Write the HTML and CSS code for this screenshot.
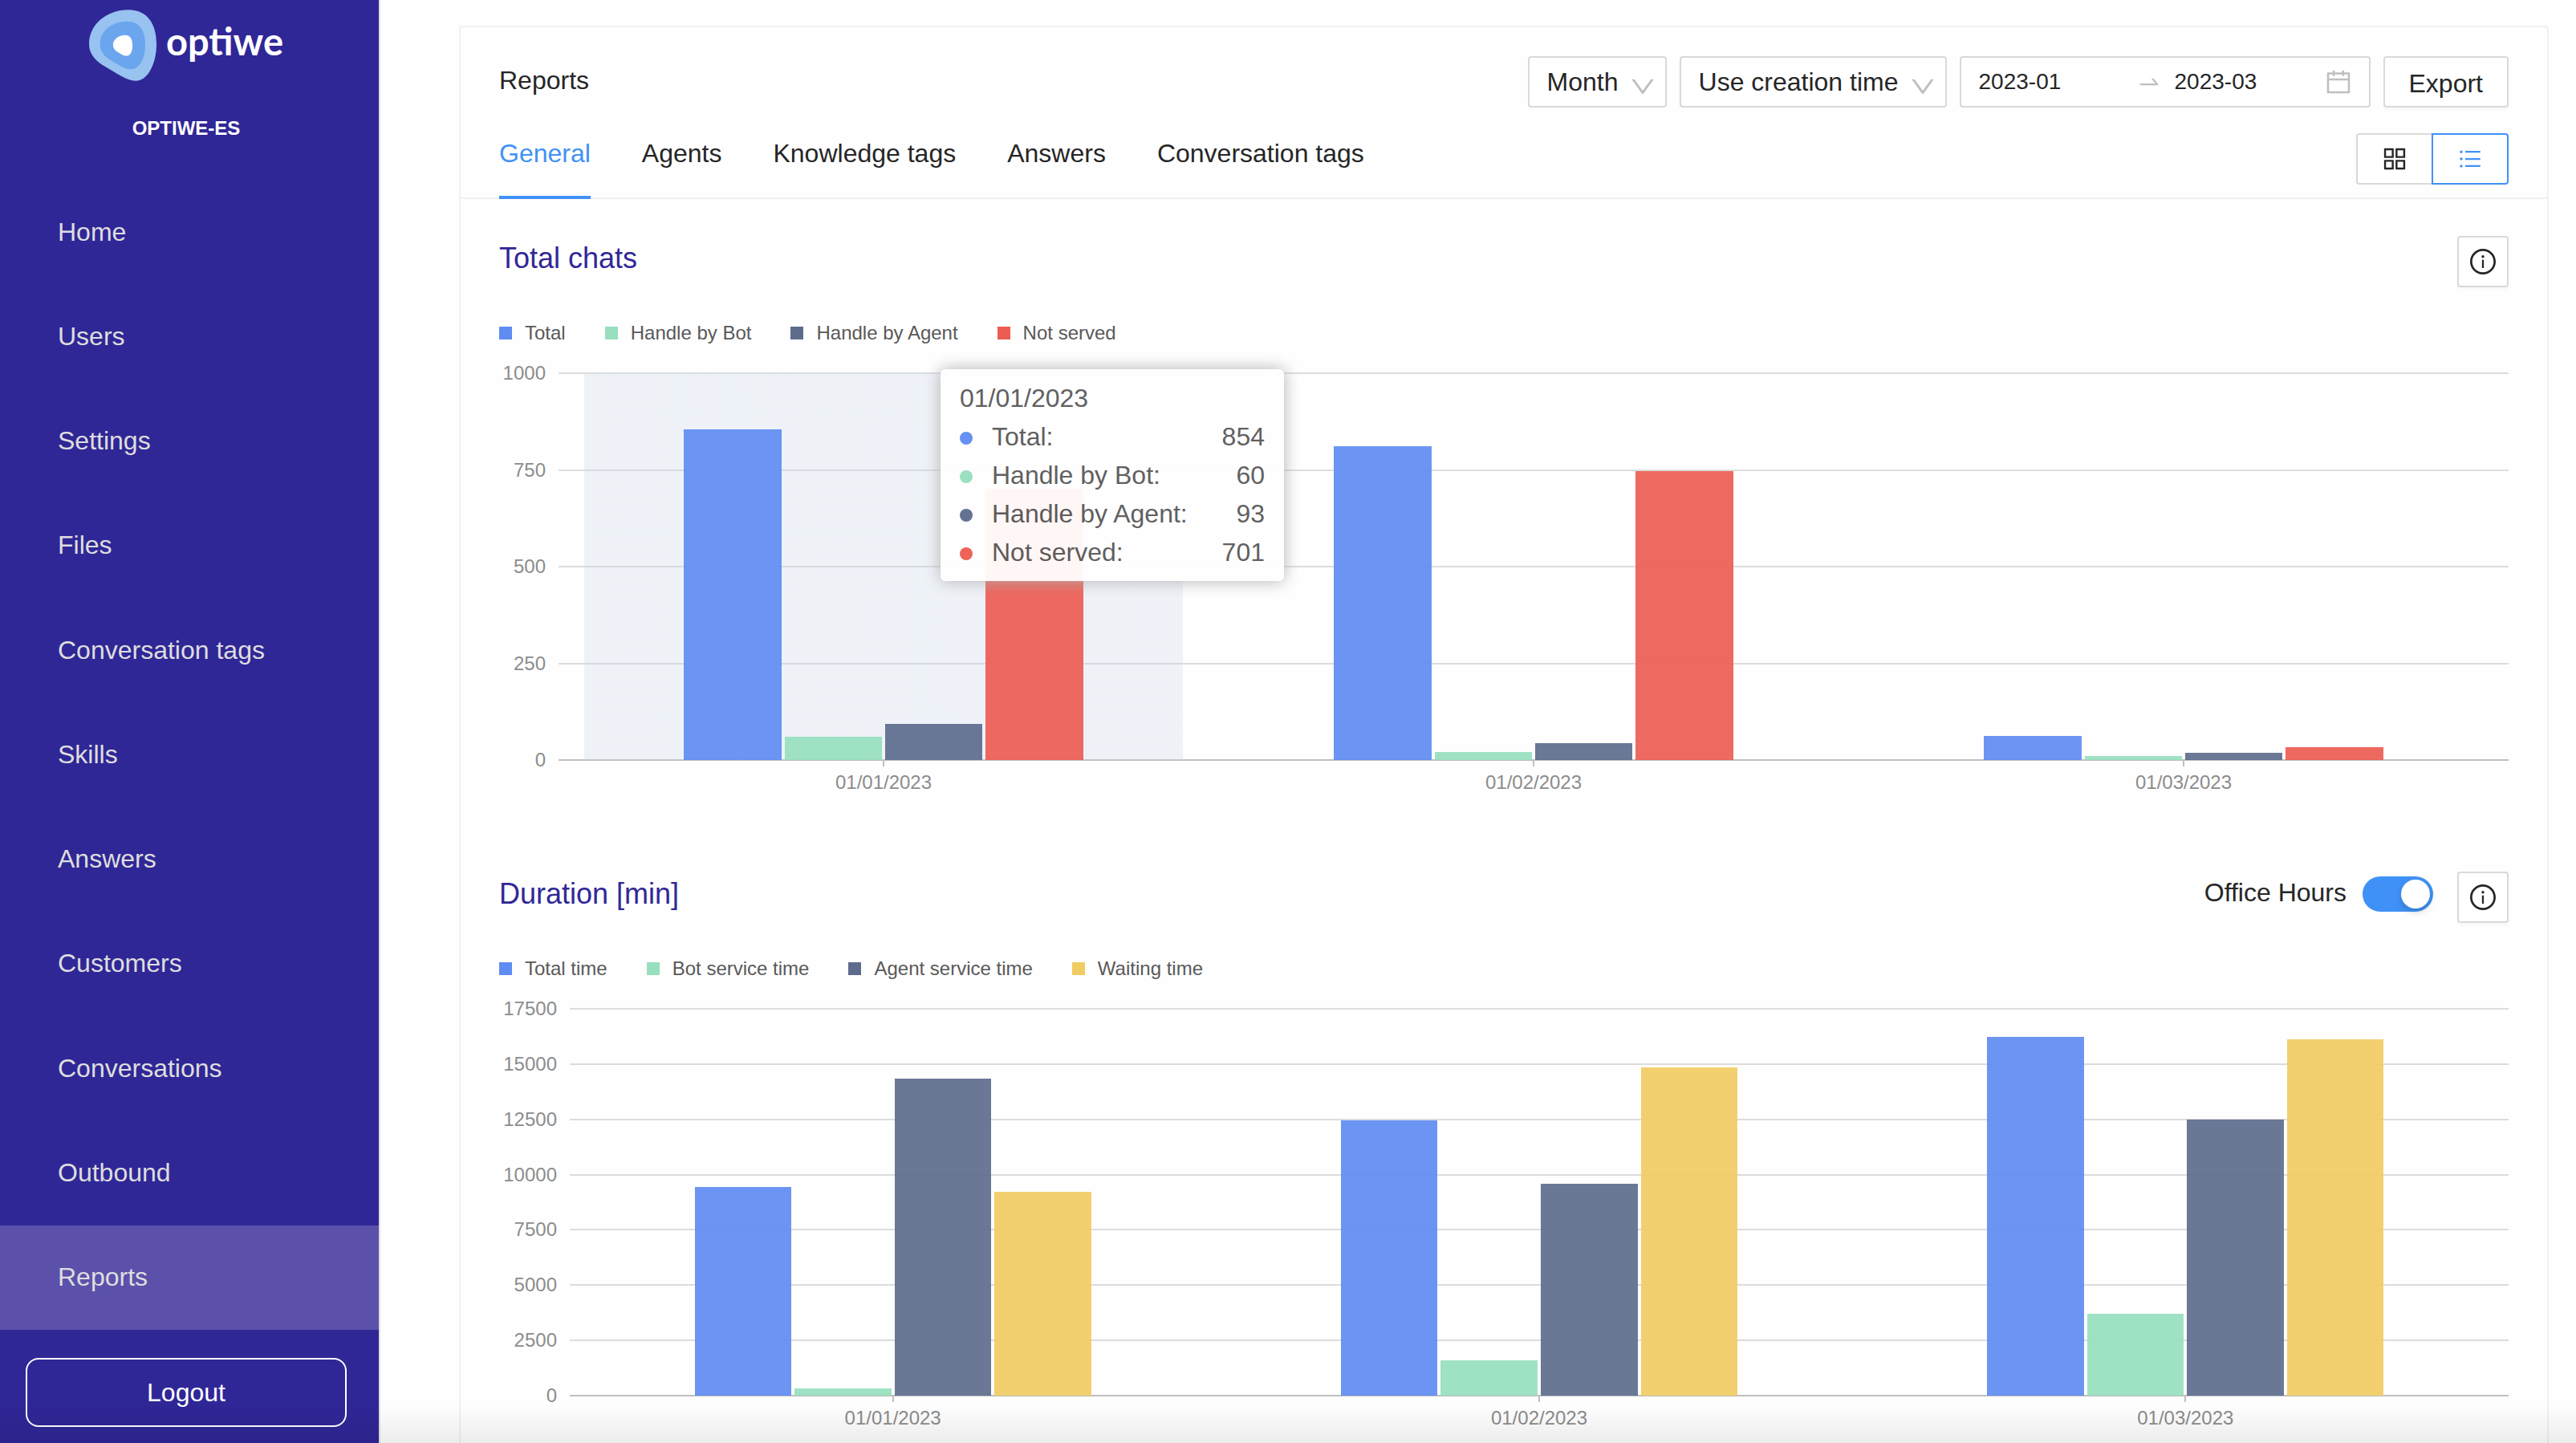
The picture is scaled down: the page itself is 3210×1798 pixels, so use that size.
FILE: index.html
```html
<!DOCTYPE html>
<html lang="en">
<head>
    <meta charset="utf-8">
    <title>Reports - optiwe</title>
    <meta name="viewport" content="width=device-width, initial-scale=1">
    <link rel="stylesheet" href="styles.css">
</head>
<body>
    <div class="app">
    <aside class="sidebar">
        <div class="brand">
            <div class="logo">
                <svg class="logo-mark" viewBox="333 36 253 267" aria-hidden="true">
                    <path fill="#98c2f0" d="M480 36C560 36 586 100 586 165C586 235 555 303 508 303C475 303 430 270 395 250C360 230 333 205 333 165C333 90 400 36 480 36z"/>
                    <path fill="#6ba5ee" d="M475 80C527 80 544 120 544 165C544 215 525 259 490 259C465 259 440 240 415 226C392 212 374 195 374 165C374 115 420 80 475 80z"/>
                    <path fill="#fff" d="M467 131C490 131 496 150 496 170C496 192 488 209 473 209C462 209 450 200 440 194C430 188 423 180 423 167C423 147 445 131 467 131z"/>
                </svg>
                <span class="logo-text">optiwe</span>
            </div>
            <div class="company">OPTIWE-ES</div>
        </div>
        <nav class="menu">
            <a href="#">Home</a>
            <a href="#">Users</a>
            <a href="#">Settings</a>
            <a href="#">Files</a>
            <a href="#">Conversation tags</a>
            <a href="#">Skills</a>
            <a href="#">Answers</a>
            <a href="#">Customers</a>
            <a href="#">Conversations</a>
            <a href="#">Outbound</a>
            <a href="#" class="active">Reports</a>
        </nav>
        <button type="button" class="logout">Logout</button>
    </aside>

    <main class="content">
        <div class="card">
            <header class="card-head">
                <div class="head-row">
                    <h1>Reports</h1>
                    <div class="filters">
                        <div class="select">
                            <select aria-label="Period">
                                <option>Month</option>
                            </select>
                            <svg class="icon" viewBox="64 64 896 896"><path d="M884 256h-75c-5.1 0-9.9 2.5-12.9 6.6L512 654.2 227.9 262.6c-3-4.1-7.8-6.6-12.9-6.6h-75c-6.5 0-10.3 7.4-6.5 12.7l352.6 486.1c12.8 17.6 39 17.6 51.7 0l352.6-486.1c3.9-5.3.1-12.7-6.4-12.7z"/></svg>
                        </div>
                        <div class="select">
                            <select aria-label="Time used">
                                <option>Use creation time</option>
                            </select>
                            <svg class="icon" viewBox="64 64 896 896"><path d="M884 256h-75c-5.1 0-9.9 2.5-12.9 6.6L512 654.2 227.9 262.6c-3-4.1-7.8-6.6-12.9-6.6h-75c-6.5 0-10.3 7.4-6.5 12.7l352.6 486.1c12.8 17.6 39 17.6 51.7 0l352.6-486.1c3.9-5.3.1-12.7-6.4-12.7z"/></svg>
                        </div>
                        <div class="range">
                            <input type="text" value="2023-01" aria-label="From">
                            <svg class="icon" viewBox="0 0 1024 1024"><path d="M873.1 596.2l-164-208A32 32 0 00684 376h-64.8c-6.7 0-10.4 7.7-6.3 13l144.3 183H152c-4.4 0-8 3.6-8 8v60c0 4.4 3.6 8 8 8h695.9c26.8 0 41.7-30.8 25.2-51.8z"/></svg>
                            <input type="text" value="2023-03" aria-label="To">
                            <svg class="icon" viewBox="64 64 896 896"><path d="M880 184H712v-64c0-4.4-3.6-8-8-8h-56c-4.4 0-8 3.6-8 8v64H384v-64c0-4.4-3.6-8-8-8h-56c-4.4 0-8 3.6-8 8v64H144c-17.7 0-32 14.3-32 32v664c0 17.7 14.3 32 32 32h736c17.7 0 32-14.3 32-32V216c0-17.7-14.3-32-32-32zm-40 656H184V460h656v380zM184 392V256h128v48c0 4.4 3.6 8 8 8h56c4.4 0 8-3.6 8-8v-48h256v48c0 4.4 3.6 8 8 8h56c4.4 0 8-3.6 8-8v-48h128v136H184z"/></svg>
                        </div>
                        <button type="button" class="btn export">Export</button>
                    </div>
                </div>
                <div class="tab-row">
                    <nav class="tabs">
                        <a href="#" class="active">General</a>
                        <a href="#">Agents</a>
                        <a href="#">Knowledge tags</a>
                        <a href="#">Answers</a>
                        <a href="#">Conversation tags</a>
                    </nav>
                    <div class="views">
                        <button type="button" aria-label="Grid view">
                            <svg class="icon" viewBox="64 64 896 896"><path d="M464 144H160c-8.800 0-16 7.200-16 16v304c0 8.800 7.200 16 16 16h304c8.800 0 16-7.200 16-16V160c0-8.800-7.200-16-16-16zm-52 268H212V212h200v200zm452-268H560c-8.800 0-16 7.200-16 16v304c0 8.800 7.200 16 16 16h304c8.800 0 16-7.200 16-16V160c0-8.800-7.200-16-16-16zm-52 268H612V212h200v200zM464 544H160c-8.800 0-16 7.200-16 16v304c0 8.800 7.200 16 16 16h304c8.800 0 16-7.200 16-16V560c0-8.800-7.200-16-16-16zm-52 268H212V612h200v200zm452-268H560c-8.800 0-16 7.200-16 16v304c0 8.800 7.200 16 16 16h304c8.800 0 16-7.200 16-16V560c0-8.800-7.200-16-16-16zm-52 268H612V612h200v200z"/></svg>
                        </button>
                        <button type="button" class="active" aria-label="List view">
                            <svg class="icon small" viewBox="64 64 896 896"><path d="M912 192H328c-4.400 0-8 3.600-8 8v56c0 4.400 3.600 8 8 8h584c4.400 0 8-3.600 8-8v-56c0-4.400-3.600-8-8-8zm0 284H328c-4.400 0-8 3.600-8 8v56c0 4.400 3.600 8 8 8h584c4.400 0 8-3.600 8-8v-56c0-4.400-3.600-8-8-8zm0 284H328c-4.400 0-8 3.600-8 8v56c0 4.400 3.600 8 8 8h584c4.400 0 8-3.600 8-8v-56c0-4.400-3.600-8-8-8zM104 228a56 56 0 10112 0 56 56 0 10-112 0zm0 284a56 56 0 10112 0 56 56 0 10-112 0zm0 284a56 56 0 10112 0 56 56 0 10-112 0z"/></svg>
                        </button>
                    </div>
                </div>
            </header>

            <section class="report">
                <div class="report-head">
                    <h2>Total chats</h2>
                    <button type="button" class="btn info" aria-label="Info">
                        <svg class="icon" viewBox="64 64 896 896"><path d="M512 64C264.600 64 64 264.600 64 512s200.600 448 448 448 448-200.600 448-448S759.400 64 512 64zm0 820c-205.400 0-372-166.600-372-372s166.600-372 372-372 372 166.600 372 372-166.600 372-372 372z"/><path d="M464 336a48 48 0 1096 0 48 48 0 10-96 0zm72 112h-48c-4.400 0-8 3.600-8 8v272c0 4.400 3.600 8 8 8h48c4.400 0 8-3.600 8-8V456c0-4.400-3.600-8-8-8z"/></svg>
                    </button>
                </div>
                <ul class="legend">
                    <li class="blue">Total</li>
                    <li class="green">Handle by Bot</li>
                    <li class="navy">Handle by Agent</li>
                    <li class="redish">Not served</li>
                </ul>
                <div class="chart">
                    <div class="y-axis">
                        <span>1000</span>
                        <span>750</span>
                        <span>500</span>
                        <span>250</span>
                        <span>0</span>
                    </div>
                    <div class="plot">
                        <div class="lines"><i></i><i></i><i></i><i></i><i></i></div>
                        <div class="groups">
                            <div class="group hover">
                                <div class="bar blue" style="height: 85.4%"></div>
                                <div class="bar green" style="height: 6%"></div>
                                <div class="bar navy" style="height: 9.3%"></div>
                                <div class="bar redish" style="height: 70.1%"></div>
                            </div>
                            <div class="group">
                                <div class="bar blue" style="height: 81.1%"></div>
                                <div class="bar green" style="height: 2.1%"></div>
                                <div class="bar navy" style="height: 4.3%"></div>
                                <div class="bar redish" style="height: 74.7%"></div>
                            </div>
                            <div class="group">
                                <div class="bar blue" style="height: 6.2%"></div>
                                <div class="bar green" style="height: 1%"></div>
                                <div class="bar navy" style="height: 1.8%"></div>
                                <div class="bar redish" style="height: 3.4%"></div>
                            </div>
                        </div>
                        <div class="tooltip">
                            <div>01/01/2023</div>
                            <ul>
                                <li class="blue">Total:<span>854</span></li>
                                <li class="green">Handle by Bot:<span>60</span></li>
                                <li class="navy">Handle by Agent:<span>93</span></li>
                                <li class="redish">Not served:<span>701</span></li>
                            </ul>
                        </div>
                    </div>
                    <div class="x-axis">
                        <span>01/01/2023</span>
                        <span>01/02/2023</span>
                        <span>01/03/2023</span>
                    </div>
                </div>
            </section>

            <section class="report">
                <div class="report-head">
                    <h2>Duration [min]</h2>
                    <label class="hours" for="office-hours">Office Hours</label>
                    <input type="checkbox" class="switch" id="office-hours" checked>
                    <button type="button" class="btn info" aria-label="Info">
                        <svg class="icon" viewBox="64 64 896 896"><path d="M512 64C264.600 64 64 264.600 64 512s200.600 448 448 448 448-200.600 448-448S759.400 64 512 64zm0 820c-205.400 0-372-166.600-372-372s166.600-372 372-372 372 166.600 372 372-166.600 372-372 372z"/><path d="M464 336a48 48 0 1096 0 48 48 0 10-96 0zm72 112h-48c-4.400 0-8 3.600-8 8v272c0 4.400 3.600 8 8 8h48c4.400 0 8-3.600 8-8V456c0-4.400-3.600-8-8-8z"/></svg>
                    </button>
                </div>
                <ul class="legend">
                    <li class="blue">Total time</li>
                    <li class="green">Bot service time</li>
                    <li class="navy">Agent service time</li>
                    <li class="yellow">Waiting time</li>
                </ul>
                <div class="chart wide">
                    <div class="y-axis">
                        <span>17500</span>
                        <span>15000</span>
                        <span>12500</span>
                        <span>10000</span>
                        <span>7500</span>
                        <span>5000</span>
                        <span>2500</span>
                        <span>0</span>
                    </div>
                    <div class="plot">
                        <div class="lines"><i></i><i></i><i></i><i></i><i></i><i></i><i></i><i></i></div>
                        <div class="groups">
                            <div class="group">
                                <div class="bar blue" style="height: 53.9%"></div>
                                <div class="bar green" style="height: 1.9%"></div>
                                <div class="bar navy" style="height: 81.9%"></div>
                                <div class="bar yellow" style="height: 52.6%"></div>
                            </div>
                            <div class="group">
                                <div class="bar blue" style="height: 71.2%"></div>
                                <div class="bar green" style="height: 9.2%"></div>
                                <div class="bar navy" style="height: 54.8%"></div>
                                <div class="bar yellow" style="height: 84.9%"></div>
                            </div>
                            <div class="group">
                                <div class="bar blue" style="height: 92.8%"></div>
                                <div class="bar green" style="height: 21.2%"></div>
                                <div class="bar navy" style="height: 71.3%"></div>
                                <div class="bar yellow" style="height: 92.2%"></div>
                            </div>
                        </div>
                    </div>
                    <div class="x-axis">
                        <span>01/01/2023</span>
                        <span>01/02/2023</span>
                        <span>01/03/2023</span>
                    </div>
                </div>
            </section>
        </div>
    </main>
    </div>
</body>
</html>
```

FILE: styles.css
```css
* {
    box-sizing: border-box;
}

body {
    margin: 0;
    background-color: #fefefe;
    color: #262626;
    font-family: "Liberation Sans", Arial, Helvetica, sans-serif;
    font-size: 32px;
}

h1, h2 {
    margin: 0;
    font-weight: normal;
}

ul {
    margin: 0;
    padding: 0;
    list-style: none;
}

a {
    color: inherit;
    text-decoration: none;
}

button, input, select {
    margin: 0;
    padding: 0;
    color: inherit;
    font: inherit;
    background: none;
}

button {
    cursor: pointer;
}

.icon {
    display: block;
    width: 32px;
    height: 32px;
    fill: currentColor;
}

.icon.small {
    width: 28px;
    height: 28px;
}

/* series colours */
.blue {
    --series: #5f8cf2;
}

.green {
    --series: #97dfbe;
}

.navy {
    --series: #5d6c8d;
}

.redish {
    --series: #ed5c52;
}

.yellow {
    --series: #f1cc63;
}

.app {
    display: flex;
    height: 100vh;
    overflow: hidden;
}

/* shade along the bottom of the window */
.app::after {
    content: "";
    position: fixed;
    left: 0;
    right: 0;
    bottom: 0;
    height: 48px;
    background: linear-gradient(rgba(0, 0, 0, 0), rgba(0, 0, 0, .07));
    pointer-events: none;
}

/* sidebar */
.sidebar {
    flex: none;
    display: flex;
    flex-direction: column;
    width: 474px;
    border-right: 2px solid #e0e0e0;
    background-color: #302797;
    color: #fff;
}

.brand {
    height: 224px;
    padding: 12px 8px 0 0;
    text-align: center;
}

.logo {
    display: flex;
    align-items: center;
    justify-content: center;
    gap: 12px;
    height: 89px;
}

.logo-mark {
    width: 84px;
    height: 89px;
}

.logo-text {
    padding-bottom: 12px;
    font-family: Lato, "Open Sans", sans-serif;
    font-size: 47px;
    font-weight: bold;
    line-height: 60px;
}

.company {
    margin-top: 40px;
    font-size: 24px;
    font-weight: bold;
    line-height: 38px;
}

.menu {
    flex: 1;
    display: flex;
    flex-direction: column;
}

.menu a {
    flex: 1;
    display: flex;
    align-items: center;
    padding-left: 72px;
    color: #dedede;
}

.menu a.active {
    background-color: #5b51ab;
}

.logout {
    height: 86px;
    margin: 35px 40px 20px 32px;
    border: 2px solid #fff;
    border-radius: 16px;
    color: #fff;
}

/* card */
.content {
    flex: 1;
    min-width: 0;
    padding: 32px 34px 32px 98px;
    overflow-y: auto;
    scrollbar-width: none;
}

.card {
    border: 2px solid #f0f0f0;
    border-radius: 4px;
    background-color: #fefefe;
}

.card-head {
    padding: 36px 48px 0;
    border-bottom: 2px solid #f0f0f0;
}

.head-row {
    display: flex;
    justify-content: space-between;
}

h1 {
    font-size: 32px;
    line-height: 60px;
}

.filters {
    display: flex;
    gap: 16px;
}

.btn, .select select, .range {
    height: 64px;
    border: 2px solid #d9d9d9;
    border-radius: 4px;
    background-color: #fff;
}

.btn {
    box-shadow: 0 4px 0 rgba(0, 0, 0, .016);
}

.select {
    position: relative;
}

.select select {
    display: block;
    padding: 0 58px 0 22px;
    -webkit-appearance: none;
    appearance: none;
    outline: none;
}

.select .icon {
    position: absolute;
    top: 22px;
    right: 14px;
    color: #bfbfbf;
    pointer-events: none;
}

.range {
    display: flex;
    align-items: center;
    width: 512px;
    padding: 0 22px;
}

.range input {
    flex: 1;
    min-width: 0;
    border: none;
    outline: none;
    font-size: 28px;
}

.range .icon {
    flex: none;
    margin-left: 8px;
    color: #bfbfbf;
}

.range .icon:last-child {
    margin-left: 0;
}

.range .icon + input {
    margin-left: 16px;
}

.export {
    padding: 4px 30px 0;
}

.tab-row {
    display: flex;
    justify-content: space-between;
    align-items: flex-start;
    height: 96px;
    margin-top: 16px;
}

.tabs {
    display: flex;
    gap: 64px;
}

.tabs a {
    height: 98px;
    padding-top: 23px;
    line-height: 36px;
}

.tabs a.active {
    border-bottom: 4px solid #4091f7;
    color: #4091f7;
}

.views {
    display: flex;
    margin-top: 16px;
}

.views button {
    display: flex;
    align-items: center;
    justify-content: center;
    width: 96px;
    height: 64px;
    border: 2px solid #d9d9d9;
    border-radius: 4px 0 0 4px;
    background-color: #fff;
}

.views button.active {
    margin-left: -2px;
    border-color: #4091f7;
    border-radius: 0 4px 4px 0;
    color: #4091f7;
}

/* reports */
.report {
    padding: 46px 48px 53px;
}

.report-head {
    display: flex;
    align-items: flex-start;
    height: 64px;
}

h2 {
    margin-right: auto;
    color: #312797;
    font-size: 36px;
    line-height: 56px;
}

.info {
    display: flex;
    align-items: center;
    justify-content: center;
    width: 64px;
}

.hours {
    line-height: 52px;
}

.switch {
    -webkit-appearance: none;
    appearance: none;
    width: 88px;
    height: 44px;
    margin: 6px 30px 0 20px;
    padding: 4px;
    border-radius: 22px;
    background-color: #bfbfbf;
    cursor: pointer;
}

.switch::before {
    content: "";
    display: block;
    width: 36px;
    height: 36px;
    border-radius: 50%;
    background-color: #fff;
    box-shadow: 0 4px 8px rgba(0, 35, 11, .2);
}

.switch:checked {
    background-color: #4091f7;
}

.switch:checked::before {
    margin-left: auto;
}

.legend {
    display: flex;
    gap: 49px;
    margin-top: 45px;
    color: #595959;
    font-size: 24px;
    line-height: 24px;
}

.legend li {
    display: flex;
    align-items: center;
}

.legend li::before {
    content: "";
    width: 16px;
    height: 16px;
    margin-right: 16px;
    background-color: var(--series);
}

.chart {
    display: grid;
    grid-template-columns: 58px 1fr;
    grid-template-rows: 482px auto;
    column-gap: 16px;
    margin-top: 38px;
    color: #8c8c8c;
    font-size: 24px;
    line-height: 24px;
}

.chart.wide {
    grid-template-columns: 72px 1fr;
}

.y-axis {
    display: flex;
    flex-direction: column;
    justify-content: space-between;
    margin: -12px 0;
    text-align: right;
}

.plot {
    position: relative;
    display: grid;
}

.lines, .groups {
    grid-area: 1 / 1;
}

.lines {
    display: flex;
    flex-direction: column;
    justify-content: space-between;
    margin: -1px 0;
}

.lines i {
    height: 2px;
    background-color: #dcdcdc;
}

.lines i:last-child {
    background-color: #bfbfbf;
}

.groups {
    display: flex;
}

.group {
    flex: 1;
    display: flex;
    align-items: flex-end;
    gap: 4px;
    padding: 0 6.44%;
}

.group.hover {
    background: linear-gradient(rgba(205, 217, 234, .32), rgba(205, 217, 234, .32)) center / calc(100% - 64px) 100% no-repeat;
}

.bar {
    flex: 1;
    background-color: var(--series);
    opacity: .92;
}

.x-axis {
    grid-column: 2;
    display: flex;
}

.x-axis span {
    flex: 1;
    text-align: center;
}

.x-axis span::before {
    content: "";
    display: block;
    width: 2px;
    height: 8px;
    margin: 0 auto 8px;
    background-color: #bfbfbf;
}

.tooltip {
    position: absolute;
    top: -5px;
    left: 476px;
    width: 428px;
    padding: 12px 24px;
    border-radius: 6px;
    background-color: #fff;
    box-shadow: 0 0 20px #aeaeae;
    color: #595959;
    font-size: 32px;
    line-height: 48px;
    opacity: .95;
}

.tooltip li {
    display: flex;
    align-items: center;
}

.tooltip li::before {
    content: "";
    width: 16px;
    height: 16px;
    margin: 4px 24px 0 0;
    border-radius: 50%;
    background-color: var(--series);
}

.tooltip li span {
    margin-left: auto;
}
```
